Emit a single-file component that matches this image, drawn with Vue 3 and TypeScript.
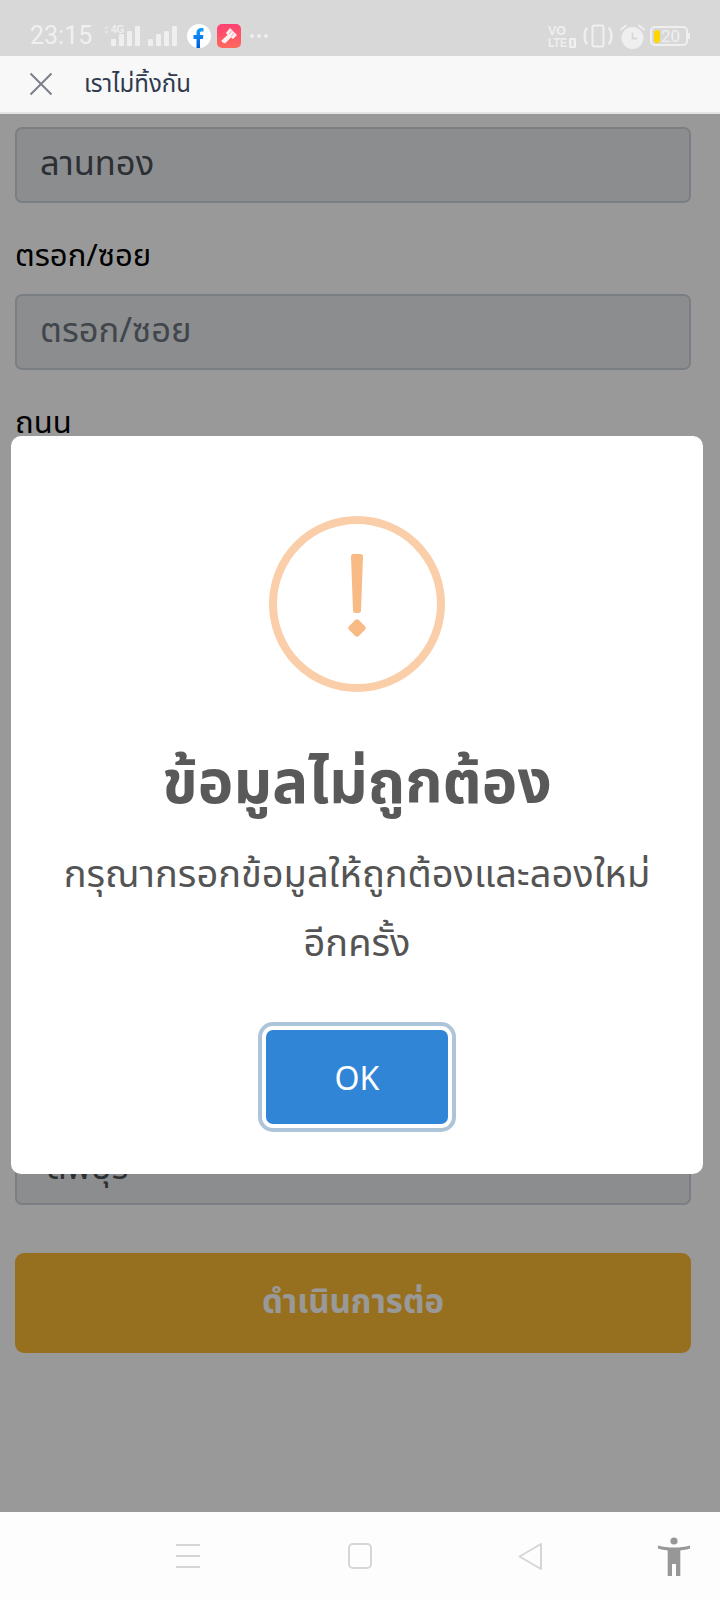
<script setup lang="ts">
interface Field {
  label: string;
  value: string;
  kind?: 'placeholder' | 'select';
}

const fields: Field[] = [
  { label: '', value: 'ลานทอง' },
  { label: 'ตรอก/ซอย', value: 'ตรอก/ซอย', kind: 'placeholder' },
  { label: 'ถนน', value: '' },
  { label: '', value: '' },
  { label: '', value: '' },
  { label: '', value: '' },
  { label: '', value: 'ลพบุรี', kind: 'select' },
];
</script>

<template>
  <div class="screen">
    <div class="status-bar">
      <span class="time">23:15</span>
      <svg class="signal" width="37" height="24" viewBox="0 0 37 24">
        <path d="M1 5 3.500 2 6 5zM1 7h5l-2.500 3z" fill="#e4e4e4" />
        <text x="8" y="9" class="tiny">4G</text>
        <rect x="8" y="15" width="5" height="7" rx="1" />
        <rect x="16" y="10" width="5" height="12" rx="1" />
        <rect x="24" y="7" width="5" height="15" rx="1" />
        <rect x="32" y="2" width="5" height="20" rx="1" />
      </svg>
      <svg class="signal-b" width="29" height="20" viewBox="0 0 29 20">
        <rect x="0" y="13" width="5" height="7" rx="1" />
        <rect x="8" y="8" width="5" height="12" rx="1" />
        <rect x="16" y="5" width="5" height="15" rx="1" />
        <rect x="24" y="0" width="5" height="20" rx="1" />
      </svg>
      <svg class="fb" width="24" height="24" viewBox="0 0 24 24">
        <defs>
          <linearGradient id="fbBlue" x1="0" y1="0" x2="0" y2="1">
            <stop offset="0" stop-color="#18a0fb" />
            <stop offset="1" stop-color="#0058e0" />
          </linearGradient>
        </defs>
        <circle cx="12" cy="12" r="12" fill="#fff" />
        <path d="M9.500 24v-9H6.500v-4h3V8.500C9.500 5.500 11.500 4 14 4c1.200 0 2.200.1 2.500.2v3.300h-1.800c-1.300 0-1.700.7-1.700 1.600V11h3.400l-.5 4h-2.900v9z" fill="url(#fbBlue)" />
      </svg>
      <svg class="brush" width="24" height="24" viewBox="0 0 24 24">
        <defs>
          <linearGradient id="brushBg" x1="0" y1="0" x2="0" y2="1">
            <stop offset="0" stop-color="#ff4073" />
            <stop offset="1" stop-color="#ff6a5c" />
          </linearGradient>
        </defs>
        <rect width="24" height="24" rx="5" fill="url(#brushBg)" />
        <path d="M13 4 20 11 16 15 14 13.500 8 19.500 5 18 4.500 16.500 10.500 11 9 9z" fill="#fff" opacity=".92" />
        <path d="M14.500 7 12 10M17 9.500 14 12.500" stroke="#ffb9bd" stroke-width="1.200" />
      </svg>
      <span class="dots">
        <i></i><i></i><i></i>
      </span>

      <span class="spacer"></span>

      <svg class="volte" width="28" height="24" viewBox="0 0 28 24">
        <text x="0" y="10.500" class="vol" textLength="18" lengthAdjust="spacingAndGlyphs">VO</text>
        <text x="0" y="23" class="vol" textLength="19" lengthAdjust="spacingAndGlyphs">LTE</text>
        <rect x="21" y="14" width="7" height="10" rx="1" fill="#efefef" />
        <rect x="23.500" y="16" width="2" height="6" fill="#d8d8d8" />
      </svg>
      <svg class="vibrate" width="30" height="24" viewBox="0 0 30 24">
        <rect x="9.500" y="1.500" width="11" height="21" rx="2" fill="none" stroke="#efefef" stroke-width="2" />
        <path d="M4 3.500C.8 8 .8 16 4 20.500M26 3.500c3.200 4.500 3.200 12.500 0 17" fill="none" stroke="#efefef" stroke-width="2.500" />
      </svg>
      <svg class="alarm" width="25" height="25" viewBox="0 0 25 25">
        <circle cx="12.500" cy="14" r="11" fill="#efefef" />
        <path d="M12.500 8.500v6h4.500" fill="none" stroke="#d8d8d8" stroke-width="1.800" />
        <path d="M1 5.500 6 1.500M24 5.500 19 1.500" stroke="#efefef" stroke-width="2" stroke-linecap="round" />
      </svg>
      <span class="battery">
        <i class="level"></i>
        <span class="percent">20</span>
      </span>
    </div>

    <div class="app-bar">
      <svg class="close" width="24" height="24" viewBox="0 0 24 24">
        <path d="M1.500 1.500 22.500 22.500M22.500 1.500 1.500 22.500" stroke="#7b808a" stroke-width="2" />
      </svg>
      <span class="app-title">เราไม่ทิ้งกัน</span>
    </div>

    <main class="content">
      <form class="form">
        <div v-for="(f, i) in fields" :key="i" class="field">
          <label v-if="i > 0" class="label">{{ f.label }}</label>
          <div class="input" :class="f.kind">{{ f.value }}</div>
        </div>
        <button type="button" class="next">ดำเนินการต่อ</button>
      </form>

      <div class="overlay">
        <div class="dialog">
          <div class="warn-icon">
            <svg class="warn-bar" width="12" height="59" viewBox="0 0 12 59">
              <path d="M2.500 0h7A2.500 2.500 0 0 1 12 2.500L10 56.500A2.500 2.500 0 0 1 7.500 59h-3A2.500 2.500 0 0 1 2 56.500L0 2.500A2.500 2.500 0 0 1 2.500 0z" fill="#f8bb86" />
            </svg>
            <span class="warn-dot"></span>
          </div>
          <h2 class="dialog-title">ข้อมูลไม่ถูกต้อง</h2>
          <p class="dialog-text">กรุณากรอกข้อมูลให้ถูกต้องและลองใหม่<br />อีกครั้ง</p>
          <button type="button" class="ok">OK</button>
        </div>
      </div>
    </main>

    <nav class="nav-bar">
      <svg class="nav-menu" width="24" height="24" viewBox="0 0 24 24">
        <path d="M0 1h24M0 12h24M0 23h24" stroke="#d6d6d6" stroke-width="2" />
      </svg>
      <svg class="nav-home" width="24" height="26" viewBox="0 0 24 26">
        <rect x="1" y="1" width="22" height="24" rx="4" fill="none" stroke="#d6d6d6" stroke-width="2" />
      </svg>
      <svg class="nav-back" width="24" height="29" viewBox="0 0 24 29">
        <path d="M23 2 1.500 14.500 23 27z" fill="none" stroke="#d6d6d6" stroke-width="2" stroke-linejoin="round" />
      </svg>
      <svg class="nav-access" width="32" height="39" viewBox="0 0 32 39">
        <circle cx="16" cy="4" r="3.600" fill="#979797" />
        <path d="M0 8.500c5 1.500 10 2 16 2s11-.5 16-2l.3 3c-3.500 1-6.500 1.500-10 2V39h-4.300V27h-4v12H9.700V13.500c-3.500-.5-6.500-1-10-2z" fill="#979797" />
      </svg>
    </nav>
  </div>
</template>

<style scoped>
.screen {
  width: 720px;
  height: 1600px;
  display: flex;
  flex-direction: column;
  overflow: hidden;
  background: #fff;
  font-family: "Noto Sans", "Noto Sans Thai", "DejaVu Sans", sans-serif;
}

.status-bar {
  height: 56px;
  flex: none;
  box-sizing: border-box;
  padding: 0 32px 0 30px;
  display: flex;
  align-items: center;
  background: #d8d8d8;
}

.status-bar svg {
  flex: none;
}

.time {
  width: 64px;
  margin-top: 16px;
  font-family: Roboto, sans-serif;
  font-size: 25px;
  line-height: 40px;
  color: #f0f0f0;
}

.signal {
  margin: 16px 0 0 9px;
}

.signal rect,
.signal-b rect {
  fill: #efefef;
}

.tiny {
  font-family: "Liberation Sans", sans-serif;
  font-size: 10px;
  font-weight: 700;
  fill: #efefef;
}

.signal-b {
  margin: 16px 0 0 8px;
}

.fb {
  margin: 16px 0 0 10px;
}

.brush {
  margin: 16px 0 0 6px;
}

.dots {
  margin: 16px 0 0 9px;
  display: flex;
  gap: 3px;
}

.dots i {
  width: 4px;
  height: 4px;
  border-radius: 50%;
  background: #efefef;
}

.spacer {
  flex: 1;
}

.volte {
  margin-top: 16px;
  margin-left: 1px;
  overflow: visible;
}

.vol {
  font-family: "Liberation Sans", sans-serif;
  font-size: 13px;
  font-weight: 700;
  fill: #efefef;
}

.vibrate {
  margin: 16px 0 0 7px;
}

.alarm {
  margin: 16px 0 0 7px;
}

.battery {
  position: relative;
  width: 38px;
  height: 20px;
  margin: 16px 0 0 5px;
  box-sizing: border-box;
  border: 2px solid #efefef;
  border-radius: 5px;
  display: flex;
  align-items: center;
  padding-left: 2px;
}

.battery::after {
  content: "";
  position: absolute;
  right: -4px;
  top: 5px;
  width: 2px;
  height: 6px;
  background: #efefef;
}

.level {
  width: 6px;
  height: 13px;
  border-radius: 3px;
  background: #ffd600;
}

.percent {
  margin-left: 1px;
  font-family: Roboto, sans-serif;
  font-size: 17px;
  line-height: 16px;
  color: #efefef;
}

.app-bar {
  height: 58px;
  flex: none;
  box-sizing: border-box;
  display: flex;
  align-items: center;
  padding-left: 29px;
  background: #f8f8f8;
  border-bottom: 2px solid #e4e4e4;
}

.app-title {
  margin-left: 31px;
  font-size: 24px;
  color: #2f3a4f;
}

.content {
  position: relative;
  flex: 1;
  overflow: hidden;
  background: #fff;
}

.form {
  padding: 13px 29px 0 15px;
  display: flex;
  flex-direction: column;
}

.field {
  display: flex;
  flex-direction: column;
}

.label {
  height: 91px;
  box-sizing: border-box;
  padding-top: 31px;
  font-size: 31px;
  line-height: 40px;
  color: #000;
}

.input {
  height: 76px;
  box-sizing: border-box;
  padding: 0 23px;
  border: 2px solid #ced4da;
  border-radius: 7px;
  background: #e9ecef;
  font-size: 34.500px;
  line-height: 66px;
  color: #495057;
}

.input.placeholder {
  color: #6c757d;
}

.input.select {
  padding-left: 30px;
  line-height: 70px;
}

.next {
  height: 100px;
  margin-top: 48px;
  border: 0;
  border-radius: 9px;
  background: #fcbb34;
  font-family: inherit;
  font-size: 33px;
  font-weight: 700;
  color: #fff;
}

.overlay {
  position: absolute;
  inset: 0;
  background: rgba(0, 0, 0, 0.4);
}

.dialog {
  position: absolute;
  left: 11px;
  top: 322px;
  width: 692px;
  height: 738px;
  box-sizing: border-box;
  padding-top: 80px;
  display: flex;
  flex-direction: column;
  align-items: center;
  background: #fff;
  border-radius: 10px;
}

.warn-icon {
  position: relative;
  width: 176px;
  height: 176px;
  box-sizing: border-box;
  border: 8px solid #facea8;
  border-radius: 50%;
}

.warn-bar {
  position: absolute;
  left: 74px;
  top: 30px;
}

.warn-dot {
  position: absolute;
  left: 73px;
  top: 97px;
  width: 14px;
  height: 14px;
  border-radius: 3px;
  background: #f8bb86;
  transform: rotate(45deg);
}

.dialog-title {
  margin: 38px 0 0;
  font-size: 60px;
  font-weight: 700;
  line-height: 100px;
  color: #595959;
}

.dialog-text {
  margin: 8px 0 0;
  font-size: 38px;
  line-height: 69px;
  text-align: center;
  color: #545454;
}

.ok {
  width: 182px;
  height: 94px;
  margin-top: 54px;
  border: 0;
  border-radius: 7px;
  background: #3085d6;
  font-family: inherit;
  font-size: 32px;
  color: #fff;
  box-shadow: 0 0 0 4px #fff, 0 0 0 8px #aec4d9;
}

.nav-bar {
  height: 88px;
  flex: none;
  display: flex;
  align-items: center;
  padding-left: 176px;
  background: #fdfdfd;
}

.nav-bar svg {
  flex: none;
}

.nav-home {
  margin-left: 148px;
}

.nav-back {
  margin-left: 146px;
}

.nav-access {
  margin-left: 116px;
}
</style>
